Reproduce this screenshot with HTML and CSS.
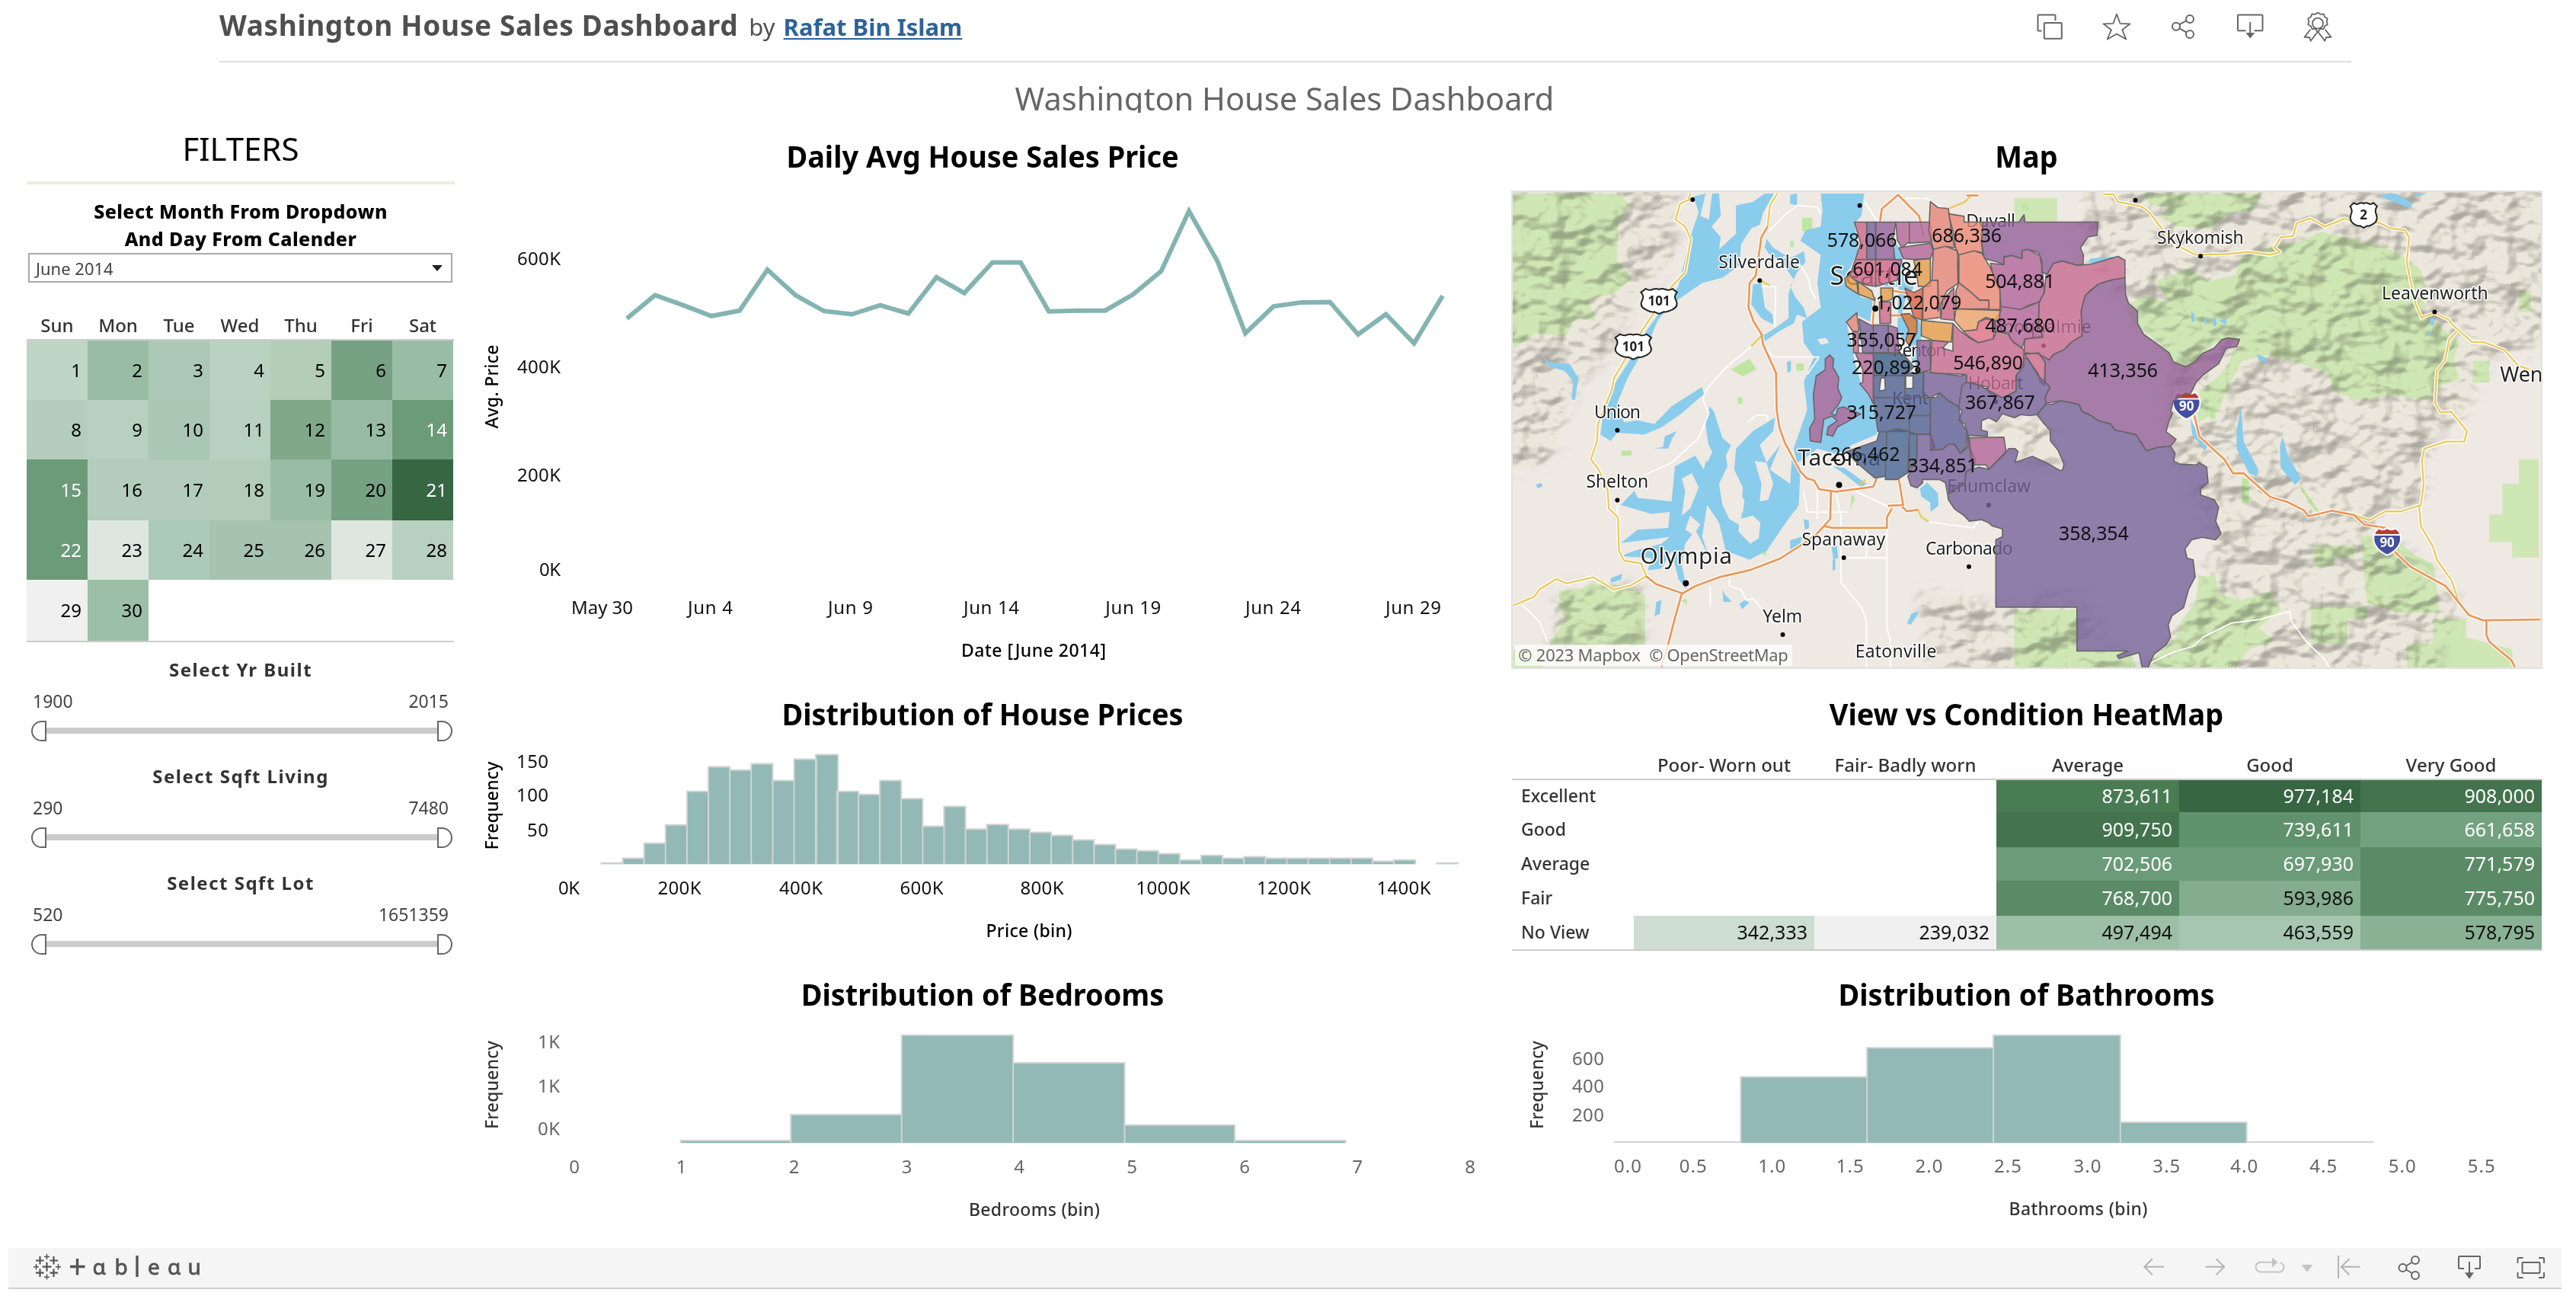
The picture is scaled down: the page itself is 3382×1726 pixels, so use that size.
FILE: index.html
```html
<!DOCTYPE html>
<html lang="en">
<head>
<meta charset="utf-8">
<title>Washington House Sales Dashboard</title>
<link rel="stylesheet" href="styles.css">
</head>
<body>
<header class="viz-header">
  <div class="viz-name"><h1 class="viz-title">Washington House Sales Dashboard</h1><span class="by">by</span><a class="author" href="#">Rafat Bin Islam</a></div>
  <div class="viz-actions">
    <svg class="icon" viewBox="0 0 40 40"><path d="M27.5 12V5.5a1 1 0 0 0-1-1h-21a1 1 0 0 0-1 1v19a1 1 0 0 0 1 1H9.5"/><rect x="12.8" y="15" width="23" height="20.7" rx="1"/></svg>
    <svg class="icon thin" viewBox="0 0 40 40"><path d="M20 3.5l4.5 12.3 13 .5-10.2 7.9 5 12.3L20 29.5 7.7 36.5l5.2-12.3L2.5 16.3l13-.5z"/></svg>
    <svg class="icon" viewBox="0 0 40 40"><circle cx="10" cy="19.8" r="5"/><circle cx="28" cy="10" r="5"/><circle cx="28" cy="30" r="5"/><path d="M14.3 17.2l9.3-5M14.3 22.4l9.3 5"/></svg>
    <svg class="icon" viewBox="0 0 40 40"><path d="M13.5 25.2H4a1 1 0 0 1-1-1V5.5a1 1 0 0 1 1-1h30.500a1 1 0 0 1 1 1v18.700a1 1 0 0 1-1 1H24.500M19.200 14v15"/><path class="solid" d="M13.500 28h11.700l-5.900 7.500z"/></svg>
    <svg class="icon thin" viewBox="0 0 40 40"><circle cx="20" cy="15.700" r="7"/><path d="M20 1.600l3.500 2.200 4.100-.4 1.500 3.800 3.600 2-1 4 1 4-3.600 2-1.500 3.800-4.100-.4-3.500 5-3.500-5-4.100.4-1.500-3.800-3.600-2 1-4-1-4 3.600-2 1.500-3.800 4.100.4z"/><path d="M10.300 23.700L2.500 33.900l6.500.1 1.700 4.800 8.400-11.300M29.700 23.700l7.800 10.200-6.500.1-1.700 4.800-8.400-11.300"/></svg>
  </div>
</header>

<div class="dash-title"><span>Washington House Sales Dashboard</span></div>

<main class="dashboard">
  <aside class="filters">
    <h2 class="filters-title">FILTERS</h2>
    <p class="hint">Select Month From Dropdown<br>And Day From Calender</p>
    <div class="dropdown"><span>June 2014</span><i class="caret"></i></div>
    <div class="calendar">
      <div class="weekdays"><span>Sun</span><span>Mon</span><span>Tue</span><span>Wed</span><span>Thu</span><span>Fri</span><span>Sat</span></div>
      <div class="days">
        <span class="c2">1</span><span class="c7">2</span><span class="c5">3</span><span class="c3">4</span><span class="c4">5</span><span class="c10">6</span><span class="c7">7</span>
        <span class="c4b">8</span><span class="c3b">9</span><span class="c5b">10</span><span class="c3b">11</span><span class="c9">12</span><span class="c7b">13</span><span class="c11">14</span>
        <span class="c11">15</span><span class="c4b">16</span><span class="c4b">17</span><span class="c4c">18</span><span class="c7">19</span><span class="c10">20</span><span class="c12">21</span>
        <span class="c11">22</span><span class="c1">23</span><span class="c5c">24</span><span class="c6">25</span><span class="c6">26</span><span class="c1">27</span><span class="c3b">28</span>
        <span class="c0">29</span><span class="c8">30</span>
      </div>
    </div>
    <section class="slider"><h3>Select Yr Built</h3><div class="range"><span>1900</span><span>2015</span></div><div class="track"><i class="knob left"></i><i class="rail"></i><i class="knob right"></i></div></section>
    <section class="slider"><h3>Select Sqft Living</h3><div class="range"><span>290</span><span>7480</span></div><div class="track"><i class="knob left"></i><i class="rail"></i><i class="knob right"></i></div></section>
    <section class="slider"><h3>Select Sqft Lot</h3><div class="range"><span>520</span><span>1651359</span></div><div class="track"><i class="knob left"></i><i class="rail"></i><i class="knob right"></i></div></section>
  </aside>

  <section class="panel">
    <h2>Daily Avg House Sales Price</h2>
    <svg class="chart" viewBox="620 250 1340 642">
      <polyline class="price-line" points="823,418.100 860,387.500 897,400.700 934,414.800 971,407.700 1007.500,354 1044.500,387.500 1081.500,408.200 1118.500,412.500 1155.500,400.700 1192.500,411.500 1229.500,363.900 1266,384.600 1303,344.500 1340,344.500 1377,408.700 1414,407.700 1451,407.700 1487.500,386.500 1524.500,355.800 1561,277 1598.500,343.100 1635,437.500 1672,402.100 1709,396.900 1746,396.400 1783,438.900 1819.500,412.500 1856.500,450.600 1894,388.400"/>
      <g class="end ink">
        <text x="736" y="348" textLength="57">600K</text><text x="736" y="489.500" textLength="57">400K</text><text x="736" y="631.500" textLength="57">200K</text><text x="736" y="755.500" textLength="28">0K</text>
      </g>
      <g class="mid ink">
        <text x="790.500" y="805.500" textLength="81">May 30</text><text x="932.500" y="805.500" textLength="59">Jun 4</text><text x="1116.500" y="805.500" textLength="59">Jun 9</text><text x="1301.500" y="805.500" textLength="73">Jun 14</text><text x="1487.800" y="805.500" textLength="73">Jun 19</text><text x="1671.500" y="805.500" textLength="73">Jun 24</text><text x="1855.500" y="805.500" textLength="73">Jun 29</text>
      </g>
      <g class="mid axis black">
        <text x="1357" y="861.500" textLength="190">Date [June 2014]</text>
        <text transform="translate(654 507.500) rotate(-90)" textLength="110">Avg. Price</text>
      </g>
    </svg>
  </section>

  <section class="panel">
    <h2>Map</h2>
    <svg class="map" viewBox="1984 250 1354 628" preserveAspectRatio="none">
      <defs>
        <filter id="relief" x="0" y="0" width="1" height="1" color-interpolation-filters="sRGB">
          <feTurbulence type="fractalNoise" baseFrequency=".02 .026" numOctaves="3" seed="11"/>
          <feColorMatrix values="0 0 0 0 0 0 0 0 0 0 0 0 0 0 0 1 0 0 0 0"/>
          <feDiffuseLighting surfaceScale="26" lighting-color="#fffdf4" diffuseConstant="1.250"><feDistantLight azimuth="235" elevation="55"/></feDiffuseLighting>
        </filter>
        <filter id="soft"><feGaussianBlur stdDeviation="9"/></filter>
        <path id="terrain" transform="translate(1980 246) scale(.86862 .40561)" d="M-20-20H255L250 230 180 400 160 520 100 640 60 900-20 920ZM75 1300L200 1290 205 1485H60ZM740 1360L860 1300 940 1558 640 1620 620 1300ZM870-20H1600V520L1490 540 1440 760 1400 800 1380 1040 1300 1060 1440 1340 1400 1600H940L1040 1350 1070 1130 1000 850 1000 560 940 360 870 240ZM715 750L820 760 840 910 780 890Z"/>
        <mask id="hills" maskUnits="userSpaceOnUse" x="1984" y="250" width="1354" height="628">
          <use href="#terrain" fill="#fff" filter="url(#soft)"/>
        </mask>
        <path id="us-shield" d="M-19-12l5-5q4 3 7 1 4-2 7 0 3-2 7 0 3 2 7-1l5 5q-4 6-1 12 3 8-4 13-6 4-9 3l-5 3-5-3q-4 1-9-3-7-5-4-13 3-6-1-12z"/>
        <path id="hwy-west" transform="translate(1970 170) scale(.44643 .46556)" d="M555 176L550 195 525 205 512 250 540 270 557 305 540 400 500 440 430 540 410 570 330 700 325 730 300 790 283 830 280 880 262 930 285 960 312 1020 315 1070 342 1095 345 1190 360 1218 410 1225 425 1262 380 1288 330 1300 270 1265 190 1282 160 1270 110 1300 95 1320 34 1345M812 176L790 210 783 270"/>
        <path id="hwy-east" transform="translate(2650 170) scale(.46684 .46556)" d="M240 178H268L280 200 345 212 370 230 400 270 440 320 500 350 585 348 650 342 710 350 738 342 722 330 740 300 775 297 785 260 822 247 865 270 920 247 960 260 1015 258 1050 275 1090 280 1102 300 1095 370 1105 420 1120 490 1137 528 1174 515 1215 535 1220 545 1280 598H1312L1370 620 1410 665 1440 675M1237 567L1215 590 1203 650 1180 680 1175 770 1190 797 1220 795 1265 850 1258 880H1205L1145 900 1138 935 1143 1000 1135 1060 1080 1078H1035L990 1103 945 1088M1130 1062L1135 1120 1170 1180 1180 1215 1222 1275 1240 1330"/>
        <path id="fwy-west" transform="translate(1970 170) scale(.44643 .46556)" d="M783 270L765 300 748 410 730 430 727 500 742 540 765 575 770 605 808 685 810 790 818 840 835 885 880 965 900 985 920 990 935 1015 985 1022 1095 1008 1105 985M970 1022L968 1100 925 1145 880 1175 820 1212 730 1245 640 1265 570 1290 530 1312 510 1380 490 1455 470 1520M530 1310L455 1285 425 1262M950 1120L975 1125H1135V1095L1150 1070M1138 1062L1183 1060 1170 985M1180 1065L1195 1078 1228 1073M1115 255L1120 220 1168 180 1230 240 1245 300M1370 182H1405M1100 470L1092 560M1140 450L1200 460M1140 522H1200"/>
        <path id="fwy-east" transform="translate(2650 170) scale(.46684 .46556)" d="M495 800L510 865 580 930 605 970H635L710 1037 760 1052 805 1075 818 1092 885 1076 945 1088 975 1115 1035 1125M1038 1170L1105 1235 1205 1290 1270 1372 1310 1387 1472 1385M1320 1390V1430L1330 1450 1390 1500 1400 1520"/>
      </defs>
      <rect x="1984" y="250" width="1354" height="628" fill="#eee9e3"/>
      <use href="#terrain" fill="#ebe7dc"/>

      <g class="forest">
        <path transform="translate(1980 246) scale(.86862 .40561)" d="M5 15H165L182 50 165 110 162 230 185 290 160 340 120 360 130 430 100 420 85 480 40 470 5 520ZM960 15H1140L1125 70 1090 80 1060 130 1010 120 985 90 1000 60 970 50ZM1150 190L1200 170 1230 140 1290 170 1340 200 1380 260 1390 330 1385 400 1440 500 1430 560 1440 620 1410 640 1390 690 1340 670 1290 690 1250 660 1240 600 1200 570 1150 540 1110 560 1090 640 1075 720 1045 760 1035 680 1080 600 1110 490 1070 500 1030 580 1000 560 985 500 945 440 935 380 960 350 1000 370 980 300 1030 260 1060 300 1100 280 1110 220ZM1505 960H1530V880H1560V1200H1520V1150H1485V1060H1505ZM1290 1130H1340L1370 1190 1400 1220 1410 1380H1350L1300 1350ZM1220 1160H1280V1200H1250V1230H1220ZM1215 1360H1300V1400H1270V1480H1215ZM765 1370H860V1505H940L950 1558H765ZM970 1540L1010 1460 1020 1400 1040 1350 1045 1260 1070 1260 1075 1320 1110 1340 1150 1310 1170 1370 1135 1430 1160 1470 1120 1500 1100 1558H980ZM1360 1480H1400V1400H1450V1460L1520 1500V1558H1360ZM75 1310L110 1300 120 1285 165 1290 205 1320V1485H60L85 1400 75 1360ZM765 30H830V110H765ZM5 1500H50V1558H5ZM1460 560h25v70h-25zM1530 330h18v70h-18z"/>
        <g class="park"><path transform="translate(1970 170) scale(.44643 .46556)" d="M885 245h30v38h-30zM675 675l55-30 20 30-40 20zM868 658h22v20h-22zM352 906h30v14h-30zM455 820h15v15h-15zM860 1050l12 20-12 10zM1030 1030l12 10-14 30zM850 310h10v18h-10zM695 755h14v18h-14zM765 1190l20-8-10 25zM530 1330l15-5v20z"/><path transform="translate(2650 170) scale(.46684 .46556)" d="M10 205h20v20h-20zM540 780h15v35h-15zM630 985h20v70h-20zM800 1010l50 70-15-5-40-60z"/></g>
      </g>
      <g mask="url(#hills)" class="hillshade"><rect x="1984" y="250" width="1354" height="628" filter="url(#relief)"/></g>

      <g class="water">
        <g transform="translate(1970 170) scale(.44643 .46556)">
          <path d="M565 185L600 176 585 240 610 250 620 176H640L645 240 618 270 645 300 640 335 690 290V210L740 200 775 176H802L770 230 760 265 735 275 705 320 700 380 650 415 590 430 560 450 500 490 460 535 440 580 400 650 370 700 340 770 360 825 400 820 450 830 500 780 590 725 595 745 530 800 470 840 420 860 340 855 320 878 290 860 300 790 330 720 370 660 430 560 520 440 555 300 580 230Z"/>
          <path d="M940 176H1068L1060 240 1040 260 1050 340 1020 400 1010 430 1060 470 1095 480 1085 540 1045 520 1015 540 1030 600 1040 650 1060 720 1090 760 1105 800V860L1030 890 1000 920 930 900 890 930 870 940 860 900 900 790 890 710 920 640 890 600 885 540 940 500 930 430 940 350 880 310 895 280 940 270 945 225Z"/>
          <path d="M850 180L870 176V210L850 205ZM780 305L800 330 850 360 890 340 895 370 870 400 850 440 865 470 890 500 900 530 870 520 860 545 820 565 775 595 770 580 810 555 845 530 845 460 860 420 820 365 790 350 775 330ZM740 435L765 430 775 500 798 520 800 548 765 530 750 510 735 490ZM840 655l12-5v30l-10 5zM120 640L140 655 200 660 225 700 215 762 205 760 210 710 185 680 140 668ZM320 1268L355 1255 350 1272 322 1280ZM455 1335l15-5-5 40-15 5zM1195 1395L1208 1368 1228 1362 1225 1372 1205 1400ZM972 1180l15-5 5 35-15 5zM975 1215l8 0v30h-8zM450 900L475 895 480 865 515 850 500 875 490 900ZM100 1002l15-5 5 10-15 6zM650 1300l8 15 20 20h-25zM700 1340l20-12 8 10-20 18z"/>
          <path d="M600 830L612 780 625 795 650 870 675 890 660 920 665 950 640 1000 650 1060 670 1100 705 1120 710 1010 685 960 690 900 740 850 805 812 800 850 760 890 780 940 820 890 790 960 850 1000 855 920 880 960 875 1060 845 1100 830 1120 780 1190 730 1215 660 1190 640 1110 605 1060 590 1150 610 1205 570 1130 540 1170 530 1230 545 1300 520 1270 500 1190 470 1240 430 1245 440 1210 350 1205 390 1190 470 1170 495 1150 460 1155 350 1168 400 1130 490 1125 495 1080 440 1085 350 1060 390 1020 400 1040 500 1050 510 950 570 920 595 960 610 900Z"/>
          <path d="M975 950L1010 955 1075 1000 1060 1010 1000 965ZM850 1160L885 1150 880 1170 850 1195ZM890 1100l15 5v20l-12 5z"/>
        </g>
        <path transform="translate(2360 240) scale(.39541 .40816)" d="M310 240L325 190 345 220 350 290 385 335 360 360 345 420 400 430 412 470 405 530 395 590 375 560 370 520 330 480 335 330 250 330 250 315 330 315ZM405 985L430 965 465 1000 467 1040 440 1060V1030L410 1010ZM970 240L1065 232 1040 245 970 256ZM1308 410l12 10v25h-10zM1350 440l10-10v25zM1380 430l12 5v25l-12-3zM1400 440l25-5v20zM1530 550l30 15-2 10z"/>
        <path transform="translate(2650 170) scale(.46684 .46556)" d="M628 780L635 880 677 960 672 978 650 970 615 900V850ZM745 865L760 920 797 985 780 1003 740 955 737 895ZM485 815L510 865 532 895 525 905 490 860ZM1020 185L1040 176H1065L1112 205 1105 218ZM1120 176H1150L1125 186ZM672 632l25 10 5 14-25-8zM1160 530h12v20h-10zM1155 570l12-5-5 14z"/>
      </g>
      <g class="island" transform="translate(1970 170) scale(.44643 .46556)"><path d="M700 1100l40-10 22 20-5 45-25 15-35-35zM530 985l30-15 20 40-25 60-25 20 10-70zM745 935l35 5 20 60-15 45-25 5 5-50zM690 1020l25 25-5 40-18-25zM555 1090l30 25-20 30-25-15zM600 870l20 40-15 30-10-30zM930 590l25-5 10 15-25 5z"/></g>

      <g class="road minor">
        <path transform="translate(1970 170) scale(.44643 .46556)" d="M785 285L830 240 870 210 930 215 940 235M830 355L880 380 905 420 910 450 925 475M735 610L660 670 605 730 592 760 610 800 580 870 500 940 420 975M770 605L800 640H935L900 690M765 440H807L805 555M725 825L750 805H780L785 820M985 1025L1000 1090 1000 1280 1060 1350 1075 1390V1520M1135 1125L1135 1410 1145 1440V1520M1000 1210H1135M1075 1130V1210M890 1020L900 1080H1020M930 990V1100M1110 260L1070 200M1190 190H1250L1300 215M1258 1108L1390 1125 1410 1100M1040 1020L1140 1065M340 1060V1095M60 1345L110 1390 135 1450M670 1270L672 1290 705 1300 720 1330 740 1325 800 1395M614 1290V1350"/>
        <path transform="translate(2650 170) scale(.46684 .46556)" d="M370 1510L430 1480 495 1460 520 1435 600 1395 680 1385 765 1362 770 1390 810 1445 865 1500 877 1520"/>
      </g>
      <g class="casing"><use href="#hwy-west"/><use href="#hwy-east"/><use href="#fwy-west"/><use href="#fwy-east"/></g>
      <g class="road yellow"><use href="#hwy-west"/><use href="#hwy-east"/><path transform="translate(1970 170) scale(.44643 .46556)" d="M765 425L790 437M735 610L770 575M1055 1003L1072 988M1228 1075L1235 1092 1258 1108M1320 218L1365 200 1385 180"/></g>
      <g class="road orange"><use href="#fwy-west"/><use href="#fwy-east"/></g>

      <g class="places">
        <text x="2255" y="350.600" textLength="107">Silverdale</text><text x="2091.400" y="549.400" textLength="61">Union</text><text x="2080.700" y="641" textLength="82">Shelton</text><text x="2364.600" y="717" textLength="110">Spanaway</text><text x="2527.600" y="728.700" textLength="115">Carbonado</text><text x="2313.300" y="818.500" textLength="52">Yelm</text><text x="2435" y="865" textLength="107">Eatonville</text><text x="2581" y="296" textLength="65">Duvall</text><text x="2832.500" y="318.400" textLength="114">Skykomish</text><text x="3128.500" y="392" textLength="140">Leavenworth</text>
        <text x="2484" y="467" textLength="71">Renton</text><text x="2617" y="436" textLength="129">Snoqualmie</text><text x="2583.400" y="510.600" textLength="73">Hobart</text><text x="2483.400" y="531" textLength="48">Kent</text><text x="2556" y="647" textLength="110">Enumclaw</text>
        <g class="city"><text x="2152" y="741" textLength="121">Olympia</text><text x="2359" y="610.900" textLength="110">Tacoma</text><text class="metro" x="2401.700" y="373" textLength="116">Seattle</text><text class="town" x="3284" y="500.500">Wen</text></g>
        <g class="dots"><circle cx="2309.300" cy="367" r="3"/><circle cx="2121.800" cy="564.800" r="3"/><circle cx="2121.800" cy="657" r="3"/><circle cx="2212" cy="766.800" r="4"/><circle cx="2413.800" cy="637" r="4"/><circle cx="2461.500" cy="404" r="4"/><circle cx="2420" cy="733" r="3"/><circle cx="2584.700" cy="745" r="3"/><circle cx="2339.600" cy="834.800" r="3"/><circle cx="2889.800" cy="334.700" r="3"/><circle cx="3198" cy="408.400" r="3"/><circle cx="2804" cy="260.800" r="3"/><circle cx="2220.900" cy="260" r="3"/><circle cx="2441" cy="267.800" r="3"/><circle cx="2517.400" cy="485" r="3.500"/><circle cx="2683" cy="453" r="3"/><circle cx="2610.700" cy="663.700" r="3"/><circle cx="2620" cy="527" r="3"/></g>
      </g>

      <g class="shield">
        <use href="#us-shield" transform="translate(2176.700 393.500) scale(1.250 .92)"/><use href="#us-shield" transform="translate(2142.800 453.500) scale(1.250 .92)"/><use href="#us-shield" transform="translate(3104.500 280) scale(.93 .92)"/>
        <text x="2176.700" y="400">101</text><text x="2142.800" y="460">101</text><text x="3104.500" y="286.500">2</text>
      </g>
      <g class="interstate">
        <g transform="translate(2871.300 531.300)"><path d="M-16-12l5-5q5 4 11 0 6 4 11 0l5 5q4 9 0 17-5 9-16 14-11-5-16-14-4-8 0-17z"/><path class="cap" d="M-16-12l5-5q5 4 11 0 6 4 11 0l5 5 1 4h-34z"/><text y="8">90</text></g>
        <g transform="translate(3135.500 711)"><path d="M-16-12l5-5q5 4 11 0 6 4 11 0l5 5q4 9 0 17-5 9-16 14-11-5-16-14-4-8 0-17z"/><path class="cap" d="M-16-12l5-5q5 4 11 0 6 4 11 0l5 5 1 4h-34z"/><text y="8">90</text></g>
      </g>

      <g class="zips" transform="translate(2360 240) scale(.39541 .40816)">
        <path fill="#77629b" d="M658 1150L680 1140V1115L645 1105 635 1095 610 1085 570 1090 550 1070 520 1050 500 1020 497 1000 512 998V978L530 975 555 970 558 930 600 915 635 922 690 870 700 855 722 855 732 865 722 900 780 880 835 905 870 925 880 925 885 905 865 860 840 830 838 795 815 770 795 745 825 710 845 712 875 700 935 712 945 735 970 745 1000 765 1040 775 1055 795 1080 800 1125 810 1160 862 1200 850 1240 848 1255 870 1250 895 1270 905 1325 908 1335 900 1360 915 1365 965 1340 985 1340 1005 1385 1020 1400 1045 1390 1090 1408 1130 1390 1150 1345 1142 1310 1150 1288 1180 1295 1210 1315 1215 1322 1270 1300 1310 1283 1370 1245 1395 1232 1425 1240 1465 1225 1490 1185 1520 1165 1563H1145L1135 1515 1068 1535 1062 1525 1097 1510H928V1368H658Z"/>
        <path fill="#936099" d="M1088 302L1090 355 1100 385 1130 410V450L1150 485 1200 520 1235 545 1250 575 1290 590 1320 575 1345 548 1385 530 1410 502 1430 497 1470 502 1460 525 1425 530 1400 580 1350 615 1325 640 1305 680 1290 675 1250 700 1240 735 1247 740 1235 765 1225 800 1258 825 1240 848 1200 850 1160 862 1125 810 1080 800 1055 795 1040 775 1000 765 970 745 945 735 935 712 875 700 825 708 822 690 838 655 822 640V575L800 545 835 568 850 550 885 535 910 510 945 490 942 410 955 360 1000 322 1040 310Z"/>
        <path fill="#c76b91" d="M1088 245L1065 233 975 258 930 262 880 248 850 255 825 295 820 345 802 385 800 460 815 490 755 500 752 545 790 548 822 560 835 568 850 550 885 535 910 510 945 490 942 410 955 360 970 345 1000 322 1040 310 1088 302Z"/>
        <path fill="#d06c8c" d="M752 550L800 545 822 575 820 650 805 640 800 615 765 565Z"/>
        <path fill="#936099" d="M615 122H735L752 98 755 122H998L995 165 965 170 940 205 950 230 948 258 930 262 880 248 850 255 830 290 810 285 812 250 800 220 765 210 745 215 745 240 710 230 685 235V260L660 250 620 240 610 185Z"/>
        <path fill="#b16599" d="M640 255L685 260V235L710 230 745 240V215L765 210 805 230 812 270 820 350 802 380 770 390 740 405 675 395 670 340 650 300ZM675 395L740 405 802 380 800 460 815 495 755 500 745 530 705 500 700 480 655 475V440L675 410Z"/>
        <path fill="#c76b91" d="M515 450L540 475 575 500 600 512 650 500 660 475 700 485 715 510 752 535 750 590 725 620V670L680 690 635 675 630 655 605 650 560 640V615L440 610 445 505 500 510 480 530 515 540Z"/>
        <path fill="#77629b" d="M752 560L765 565 800 620 838 655 822 690 825 710 795 745 770 748 740 745 720 755 680 742 660 768 635 755 610 765V795L630 800V815L565 812 555 775 535 765 545 735 535 720 545 650 560 640 605 650 630 665 680 690 725 670 728 615 750 590ZM418 605L540 620 560 615V640L545 650 535 720 500 700 470 675 440 690 415 680Z"/>
        <path fill="#5f5f98" d="M440 690L460 690 470 675 500 700 535 720 540 765 562 800 560 850 540 870 520 840 500 840 480 858 440 860Z"/>
        <path fill="#4f6094" d="M250 618H355V690H250ZM355 610H418V690H355ZM250 690H370V800H265ZM370 690H440V748H370ZM370 748H440V808H370Z"/>
        <path fill="#496494" d="M160 865L262 830 270 800H295L290 945 255 950 200 905ZM295 800L330 790 370 800V930L330 955H290ZM370 800L395 808V885L365 930Z"/>
        <path fill="#3b608a" d="M250 545L350 550 385 590 355 620 252 618Z"/>
        <path fill="#77629b" d="M395 810L440 808 455 850 440 860 480 858 500 840 520 840 540 870 565 850V812L570 820 575 860 590 890 585 915 558 930 555 970 497 1000 490 965 470 955H412L415 965 395 982 375 975 365 945 395 885Z"/>
        <path fill="#b16599" d="M568 820L685 818 692 865 635 922 625 908H590L575 885ZM90 565L105 552 118 565 115 590 135 625 132 660 145 690 132 715 110 740 125 750 132 725 150 720 208 743 160 770 130 785 115 815 95 810 100 785 130 765 112 750 85 760 75 835 40 830 38 790 55 760 50 680 60 620 90 600ZM325 122H370V185L345 205 330 180ZM370 122H440L445 185 370 190ZM335 205L440 190 450 215 440 240 385 243 350 240ZM190 545L250 548V710L235 680 205 645 215 640V600Z"/>
        <path fill="#936099" d="M258 122H325L315 180 322 243H258ZM395 505L440 505V600L400 610ZM300 455L330 465 335 545H300Z"/>
        <path fill="#77629b" d="M228 122H258V243H228ZM202 435L250 460 250 545H215ZM250 455L300 455V545H250Z"/>
        <path fill="#d0668a" d="M187 122H228V243H190L208 190ZM190 243H258V330L225 325 170 300ZM258 243H345L330 310 258 330ZM480 375L518 335 520 440 475 435ZM270 380H308V450H272ZM182 475L200 480V545H184Z"/>
        <path fill="#e39c48" d="M155 305L170 292 195 315 200 355 160 330ZM200 315L245 345 255 375 200 355ZM275 335H315V370L295 378H275ZM385 245L440 240V330H400L395 290ZM410 440L515 450 510 510 450 505 410 490Z"/>
        <path fill="#ee8a75" d="M500 95L552 103V122H615L610 185 615 225 585 215 535 228 525 210 515 150ZM535 228L585 215 610 220 640 270 672 340V405H635V375H605L570 345 535 318ZM415 335L445 310H465L475 430 415 438Z"/>
        <path fill="#e58478" d="M535 318L570 345 605 375H635V403H525V345ZM440 55L465 75 500 78 510 150 520 205 490 200 450 210 435 150ZM450 210L490 200 530 215 532 320 495 345 480 375 465 410 465 310H445ZM160 445L195 415 202 475H182Z"/>
        <path fill="#eda46c" d="M525 403L672 408 670 440 655 440 625 430 600 445 595 470 550 475 520 440Z"/>
        <path fill="#e0708a" d="M550 475L595 470 600 445 625 435 655 440 650 500 600 512 565 490Z"/>
        <path fill="#de6245" d="M355 335L385 350 415 335 412 438 385 430 370 380Z"/>
        <path fill="#e07a35" d="M342 420L370 418 395 440V480L370 522 358 505 368 470Z"/>
        <path class="gap" d="M275 628L288 624 290 665 270 668ZM358 620H382V660H358Z"/>
      </g>
      <g class="ink">
        <text x="2398" y="322.900" textLength="92">578,066</text><text x="2536" y="316.700" textLength="92">686,336</text><text x="2431.600" y="360.800" textLength="92">601,084</text><text x="2462" y="405.300" textLength="113">1,022,079</text><text x="2606" y="376.700" textLength="92">504,881</text><text x="2606" y="434.700" textLength="92">487,680</text><text x="2423.700" y="454.300" textLength="92">355,057</text><text x="2564" y="484.900" textLength="92">546,890</text><text x="2430.400" y="490.200" textLength="92">220,893</text><text x="2741.600" y="494.300" textLength="92">413,356</text><text x="2579.800" y="536.700" textLength="92">367,867</text><text x="2423.700" y="550.200" textLength="92">315,727</text><text x="2402" y="605.700" textLength="92">266,462</text><text x="2504" y="620.400" textLength="92">334,851</text><text x="2703.200" y="710.200" textLength="92">358,354</text>
      </g>
      <rect x="1987" y="848" width="365" height="28" fill="#fff" fill-opacity=".75"/>
      <g class="credit"><text x="1991.400" y="870" textLength="161">© 2023 Mapbox</text><text x="2163.800" y="870" textLength="183">© OpenStreetMap</text></g>
    </svg>
  </section>

  <section class="panel">
    <h2>Distribution of House Prices</h2>
    <svg class="chart" viewBox="620 982 1340 278">
      <path class="bars" transform="translate(600 900) scale(.86097 .45918)" d="M220 510V507h32.700v3M252.700 510V493h32.700v17M285.300 510V450h32.700v60M318 510V398h32.700v112M350.700 510V302h32.700v208M383.300 510V232h32.700v278M416 510V241h32.700v269M448.700 510V223h32.700v287M481.300 510V271h32.700v239M514 510V210h34v300M547 510V197h34v313M579.400 510V302h32.700v208M612 510V311h32.700v199M644.700 510V271h32.700v239M677.400 510V323h32.700v187M710 510V402h32.700v108M742.700 510V345h32.700v165M775.400 510V410h32.700v100M808 510V397h32.700v113M840.700 510V410h32.700v100M873.400 510V419h32.700v91M906 510V428h32.700v82M938.700 510V441h32.700v69M971.400 510V454h32.700v56M1004 510V467h32.700v43M1036.700 510V472h32.700v38M1069.400 510V480h32.700v30M1102 510V498h32.700v12M1134.700 510V485h32.700v25M1167.400 510V493h32.700v17M1200 510V489h32.700v21M1232.700 510V493h32.700v17M1265.400 510V493h32.700v17M1298 510V493h32.700v17M1330.700 510V493h32.700v17M1363.400 510V493h32.700v17M1396 510V502h32.700v8M1428.700 510V498h32.700v12M1494 510V507h32.700v3"/>
      <g class="end ink"><text x="720" y="1008" textLength="42">150</text><text x="720" y="1052" textLength="42">100</text><text x="720" y="1098" textLength="28">50</text></g>
      <g class="mid ink"><text x="747" y="1173.500" textLength="28">0K</text><text x="892" y="1173.500" textLength="57">200K</text><text x="1051.500" y="1173.500" textLength="57">400K</text><text x="1210" y="1173.500" textLength="57">600K</text><text x="1368" y="1173.500" textLength="57">800K</text><text x="1527" y="1173.500" textLength="71">1000K</text><text x="1685.500" y="1173.500" textLength="71">1200K</text><text x="1843" y="1173.500" textLength="71">1400K</text></g>
      <g class="mid axis black"><text x="1351" y="1229.500" textLength="113">Price (bin)</text><text transform="translate(654 1057.500) rotate(-90)" textLength="116">Frequency</text></g>
    </svg>
  </section>

  <section class="panel">
    <h2>View vs Condition HeatMap</h2>
    <div class="heatmap">
      <div class="row head"><span></span><span>Poor- Worn out</span><span>Fair- Badly worn</span><span>Average</span><span>Good</span><span>Very Good</span></div>
      <div class="row short"><b>Excellent</b><i></i><i></i><span class="h2">873,611</span><span class="h0">977,184</span><span class="h1">908,000</span></div>
      <div class="row tall"><b>Good</b><i></i><i></i><span class="h1">909,750</span><span class="h4">739,611</span><span class="h6">661,658</span></div>
      <div class="row"><b>Average</b><i></i><i></i><span class="h5">702,506</span><span class="h5">697,930</span><span class="h3">771,579</span></div>
      <div class="row tall"><b>Fair</b><i></i><i></i><span class="h3">768,700</span><span class="h7 dark">593,986</span><span class="h3">775,750</span></div>
      <div class="row"><b>No View</b><span class="h11 dark">342,333</span><span class="h12 dark">239,032</span><span class="h9 dark">497,494</span><span class="h10 dark">463,559</span><span class="h8 dark">578,795</span></div>
    </div>
  </section>

  <section class="panel">
    <h2>Distribution of Bedrooms</h2>
    <svg class="chart" viewBox="620 1350 1340 288">
      <path class="bars" transform="translate(600 900) scale(.86097 .45918)" d="M341 1307V1300H509V1307M509 1307V1226H678V1307M678 1307V999H848V1307M848 1307V1078H1018V1307M1018 1307V1256H1186V1307M1186 1307V1300H1355V1307"/>
      <g class="end soft"><text x="735" y="1375.500" textLength="29">1K</text><text x="735" y="1433.500" textLength="29">1K</text><text x="735" y="1489.500" textLength="29">0K</text></g>
      <g class="mid soft"><text x="754" y="1539.500">0</text><text x="894.500" y="1539.500">1</text><text x="1042.500" y="1539.500">2</text><text x="1190.600" y="1539.500">3</text><text x="1338" y="1539.500">4</text><text x="1486" y="1539.500">5</text><text x="1634" y="1539.500">6</text><text x="1782" y="1539.500">7</text><text x="1930" y="1539.500">8</text></g>
      <g class="mid axis"><text x="1358" y="1595.500" textLength="172">Bedrooms (bin)</text><text transform="translate(654 1424) rotate(-90)" textLength="116">Frequency</text></g>
    </svg>
  </section>

  <section class="panel">
    <h2>Distribution of Bathrooms</h2>
    <svg class="chart" viewBox="1984 1350 1354 288">
      <path class="bars" transform="translate(1960 900) scale(.90689 .45918)" d="M359 1307V1118H542V1307M542 1307V1035H725V1307M725 1307V999H909V1307M909 1307V1248H1092V1307M175 1304.500H359M1092 1304.500H1276"/>
      <g class="end soft"><text x="2106" y="1397.500" textLength="42">600</text><text x="2106" y="1433.500" textLength="42">400</text><text x="2106" y="1471.500" textLength="42">200</text></g>
      <g class="mid soft"><text x="2137" y="1539.500" textLength="36">0.0</text><text x="2223" y="1539.500" textLength="36">0.5</text><text x="2326.500" y="1539.500" textLength="36">1.0</text><text x="2429" y="1539.500" textLength="36">1.5</text><text x="2533" y="1539.500" textLength="36">2.0</text><text x="2636.500" y="1539.500" textLength="36">2.5</text><text x="2741" y="1539.500" textLength="36">3.0</text><text x="2845" y="1539.500" textLength="36">3.5</text><text x="2947" y="1539.500" textLength="36">4.0</text><text x="3051" y="1539.500" textLength="36">4.5</text><text x="3154.500" y="1539.500" textLength="36">5.0</text><text x="3258.700" y="1539.500" textLength="36">5.5</text></g>
      <g class="mid axis"><text x="2729" y="1595.500" textLength="182">Bathrooms (bin)</text><text transform="translate(2026 1424) rotate(-90)" textLength="116">Frequency</text></g>
    </svg>
  </section>
</main>

<footer class="toolbar">
  <svg class="logo" viewBox="40 1638 230 52" width="230" height="52">
    <path class="mark" d="M55.500 1662.700h12M61.500 1656.700v12M47 1654.500h10.500M52.500 1649v10.500M65.500 1654.500H76M70.500 1649v10.500M47 1670.700h10.500M52.500 1665.500V1676M65.500 1670.700H76M70.500 1665.500V1676"/>
    <path class="mark fine" d="M44 1662.700h7M47.500 1659v7.500M73 1662.700h7M76.500 1659v7.500M58 1649.500h7M61.500 1646v7M58 1676.300h7M61.500 1672.500v7"/>
    <path class="stem" d="M92 1662.500h19.500M101.500 1652v21.500M180 1648v28"/>
    <text x="121.500 150.500 194 220 246.500" y="1673">ɑbeɑu</text>
  </svg>
  <div class="tools">
    <svg class="t1" viewBox="2811 1642 34 42"><path d="M2841 1662.700h-25.500M2826 1652.300l-10.700 10.400 10.700 10.700"/></svg>
    <svg class="t2" viewBox="2892 1642 34 42"><path d="M2895.600 1662.700H2920M2909.500 1652.300l10.700 10.400-10.700 10.700"/></svg>
    <svg class="t3" viewBox="2957 1642 84 42"><path class="loop" d="M2984 1656.700h-16a6.300 6.300 0 0 0 0 12.800h22a6.300 6.300 0 0 0 4-12.200"/><path class="fill" d="M2983 1650.500l7.500 6.200-7.500 6.500zM3021.500 1660H3036.500L3029 1669.500z"/></svg>
    <svg class="t4" viewBox="3066 1642 36 42"><path d="M3070 1648v30M3098.600 1662.700H3073.500M3084.500 1652.300l-10.700 10.400 10.700 10.700"/></svg>
    <svg class="t5 strong" viewBox="3145 1642 36 42"><circle cx="3154.500" cy="1664" r="5"/><circle cx="3171" cy="1654" r="5"/><circle cx="3171" cy="1674" r="5"/><path d="M3159 1661.500l7.500-4.500M3159 1666.500l7.500 4.500"/></svg>
    <svg class="t6 strong" viewBox="3223 1642 38 42"><path d="M3235 1665h-6a1 1 0 0 1-1-1v-14a1 1 0 0 1 1-1h26a1 1 0 0 1 1 1v14a1 1 0 0 1-1 1h-6M3242 1656v16"/><path class="dark" d="M3236 1670.300h12l-6 8.500z"/></svg>
    <svg class="t7 strong" viewBox="3302 1642 42 42"><rect x="3311.500" y="1657" width="23" height="14" rx="1"/><path d="M3305.500 1658v-6a1 1 0 0 1 1-1h6M3333 1651h6a1 1 0 0 1 1 1v6M3340 1670v6a1 1 0 0 1-1 1h-6M3312.500 1677h-6a1 1 0 0 1-1-1v-6"/></svg>
  </div>
</footer>
</body>
</html>
```
FILE: styles.css
```css
* { box-sizing: border-box; }
body {
  margin: 0;
  background: #fff;
  color: #333;
  font-family: "Noto Sans", "Open Sans", sans-serif;
  font-size: 24px;
}
h1, h2, h3, p { margin: 0; }
i { font-style: normal; }

/* page header */
.viz-header {
  width: 2799px;
  height: 82px;
  margin-left: 288px;
  padding-right: 24px;
  border-bottom: 2px solid #ddd;
  display: flex;
  justify-content: space-between;
  align-items: flex-start;
}
.viz-name { display: flex; align-items: baseline; white-space: nowrap; color: #4f4f4f; }
.viz-title { font-size: 37px; line-height: 66px; font-weight: 700; letter-spacing: .65px; }
.by { margin-left: 14px; font-size: 31px; }
.author { margin-left: 11px; font-size: 31px; font-weight: 700; color: #2e6399; text-decoration: underline; text-decoration-thickness: 2px; text-underline-offset: 3px; }
.viz-actions { display: flex; gap: 48px; padding-top: 15px; }
.icon { width: 40px; height: 40px; fill: none; stroke: #666; stroke-width: 2; overflow: visible; }
.icon.thin { stroke-width: 1.8; stroke-linejoin: round; }
.icon .solid { fill: #666; stroke: none; }

.dash-title {
  height: 66px;
  overflow: hidden;
  padding-right: 9px;
  text-align: center;
  color: #666;
  font-size: 41.6px;
  line-height: 94px;
  margin-bottom: 12px;
  white-space: nowrap;
}

/* dashboard grid */
.dashboard {
  display: grid;
  grid-template-columns: 562px 1340px 1354px;
  grid-template-rows: 732px 368px 378px;
  column-gap: 23px;
  margin-left: 35px;
  width: 3303px;
}
.dashboard > :nth-child(odd):not(.filters) { margin-left: 1px; }
.filters { grid-row: 1 / span 3; }
.panel { display: flex; flex-direction: column; min-width: 0; }
.panel h2 {
  height: 90px;
  line-height: 89px;
  font-size: 40px;
  font-weight: 700;
  color: #000;
  text-align: center;
  white-space: nowrap;
  transform: scaleX(.947);
}

/* filter column */
.filters-title { height: 82px; padding-top: 6px; border-bottom: 4px solid #ebeddb; font-size: 42px; font-weight: 400; line-height: 57px; text-align: center; color: #000; }
.hint { margin-top: 17px; font-size: 25px; font-weight: 800; letter-spacing: .4px; line-height: 36px; text-align: center; color: #000; height: 73px; }
.dropdown { width: 557px; height: 39px; margin-left: 2px; padding: 0 11px 0 8px; border: 2px solid #aaa; display: flex; align-items: center; justify-content: space-between; font-size: 22px; color: #444; }
.caret { border: 7px solid transparent; border-top: 8px solid #222; border-bottom: 0; }
.calendar { margin-top: 38px; border-bottom: 2px solid #ccc; width: 561px; }
.weekdays { display: grid; grid-template-columns: repeat(7, 80px); height: 38px; border-bottom: 2px solid #ccc; text-align: center; line-height: 35px; font-weight: 500; }
.days { display: grid; grid-template-columns: repeat(7, 80px); grid-template-rows: 78px 78px 80px 78px 80px; color: #000; font-size: 24px; }
.days span { display: flex; align-items: center; justify-content: flex-end; padding: 0 8px 1px 0; }
.c0 { background: #f0f0f0; } .c1 { background: #dde7df; } .c2 { background: #bfd5c6; } .c3 { background: #bad2c1; } .c3b { background: #b8d0bf; }
.c4 { background: #b4cdb7; } .c4b { background: #b4ccbb; } .c4c { background: #b2ccb7; } .c5 { background: #abc8b6; } .c5b { background: #a9c7b2; } .c5c { background: #abcab7; }
.c6 { background: #a5c3ae; } .c7 { background: #99bda4; } .c7b { background: #97bba2; } .c8 { background: #9cbfa7; } .c9 { background: #7fa989; } .c10 { background: #76a283; }
.days .c11 { background: #6b9b78; color: #fff; } .days .c12 { background: #376642; color: #fff; }

.slider { height: 140px; }
.slider h3 { padding-top: 12px; font-size: 24px; line-height: 47px; height: 60px; text-align: center; font-weight: 700; letter-spacing: 1.5px; color: #333; }
.range { display: flex; justify-content: space-between; padding: 0 8px; line-height: 36px; height: 41px; color: #444; margin-top: -1px; font-size: 23px; }
.track { display: flex; align-items: center; margin: 2px 3px 0 6px; height: 28px; }
.rail { flex: 1; height: 8px; background: #cbcbcb; }
.knob { width: 20px; height: 27px; border: 2px solid #666; background: #fff; }
.knob.left { border-radius: 14px 0 0 14px; }
.knob.right { border-radius: 0 14px 14px 0; }

/* charts */
.chart { display: block; width: 100%; flex: 1; font-size: 24px; }
svg text { white-space: pre; }
svg .mid { text-anchor: middle; }
svg .end { text-anchor: end; }
.ink { fill: #111; }
.soft { fill: #666; }
.axis { fill: #333; font-weight: 500; font-size: 23px; }
.axis.black { fill: #000; }
.price-line { fill: none; stroke: #84b4b1; stroke-width: 6; stroke-linejoin: miter; }
.bars { fill: #92b9b6; stroke: #d3d3d3; stroke-width: 2; vector-effect: non-scaling-stroke; }

/* map */
.map { display: block; width: 1354px; height: 628px; border: 2px solid #e2e2e2; font-size: 25px; }
.map path { vector-effect: non-scaling-stroke; }
.forest { fill: #cfe6b5; }
.park { fill: #bfe5a2; }
.hillshade { mix-blend-mode: multiply; opacity: .27; }
.water { fill: #8accec; }
.island { fill: #eee9e3; }
.road, .casing { fill: none; stroke-linejoin: round; }
.minor { stroke: #fff; stroke-width: 1.8; }
.casing { stroke: #fff; stroke-width: 5; }
.yellow { stroke: #e9cb62; stroke-width: 2.4; }
.orange { stroke: #e9995a; stroke-width: 2.8; }
.places { font-size: 23px; fill: #222; paint-order: stroke; stroke: #fff; stroke-width: 3; stroke-linejoin: round; }
.city { font-size: 30px; }
.metro { font-size: 34px; }
.town { font-size: 27px; }
.dots { fill: #000; stroke: none; }
.shield use { fill: #fff; stroke: #222; stroke-width: 2; }
.shield text { font: 700 17px "Noto Sans", sans-serif; fill: #222; text-anchor: middle; }
.interstate path { fill: #434fa0; stroke: #fff; stroke-width: 2; }
.interstate .cap { fill: #bb3b31; }
.interstate text { font: 700 17px "Noto Sans", sans-serif; fill: #fff; text-anchor: middle; }
.zips { fill-opacity: .8; stroke: #666; stroke-width: 1.6; stroke-linejoin: round; }
.zips .gap { fill: #f3f0ec; fill-opacity: 1; }
.credit { fill: #666; font-size: 22px; }

/* heatmap */
.heatmap { width: 1354px; padding-left: 1px; }
.row { display: grid; grid-template-columns: 160px 237px 239px 240px 238px 238px; height: 44px; border: 0; line-height: 43px; }
.row.head { height: 42px; border-bottom: 2px solid #ccc; text-align: center; line-height: 43px; font-weight: 500; }
.row.short { height: 42px; line-height: 41px; }
.row.tall { height: 46px; line-height: 45px; }
.row:last-child { height: 46px; border-bottom: 2px solid #ccc; }
.row b { padding-left: 12px; font-weight: 500; font-size: 23px; }
.row:not(.head) span { padding-right: 9px; text-align: right; color: #fff; font-size: 25px; }
.row:not(.head) .dark { color: #111; }
.h0 { background: #376642; } .h1 { background: #43744d; } .h2 { background: #4a7c54; } .h3 { background: #5a8b66; } .h4 { background: #61926e; } .h5 { background: #6b9b78; }
.h6 { background: #73a280; } .h7 { background: #84ac8e; } .h8 { background: #89b194; } .h9 { background: #9dbfa6; } .h10 { background: #a6c6af; } .h11 { background: #cdddd1; } .h12 { background: #f0f0f0; }

/* bottom toolbar */
.toolbar { width: 3352px; height: 54px; margin-left: 11px; padding: 0 19px 0 29px; background: #f5f5f5; border-bottom: 2px solid #d0d0d0; display: flex; justify-content: space-between; }
.logo { fill: none; stroke: #555; stroke-width: 2.2; }
.logo .fine { stroke-width: 1.5; }
.logo .stem { stroke-width: 3.4; }
.logo text { fill: #555; stroke: #555; stroke-width: .8; font: 400 28px "Noto Sans", "DejaVu Sans", sans-serif; }
.tools { display: flex; padding-top: 4px; fill: none; stroke: #b4b4b4; stroke-width: 2; }
.tools svg { height: 42px; }
.tools .strong { stroke: #666; }
.tools .fill { fill: #c4c4c4; stroke: none; }
.tools .loop { stroke: #c4c4c4; }
.tools .dark { fill: #666; stroke: none; }
.t1 { width: 34px; margin-right: 47px; }
.t2 { width: 34px; margin-right: 31px; }
.t3 { width: 84px; margin-right: 25px; }
.t4 { width: 36px; margin-right: 43px; }
.t5 { width: 36px; margin-right: 42px; }
.t6 { width: 38px; margin-right: 41px; }
.t7 { width: 42px; }
```
